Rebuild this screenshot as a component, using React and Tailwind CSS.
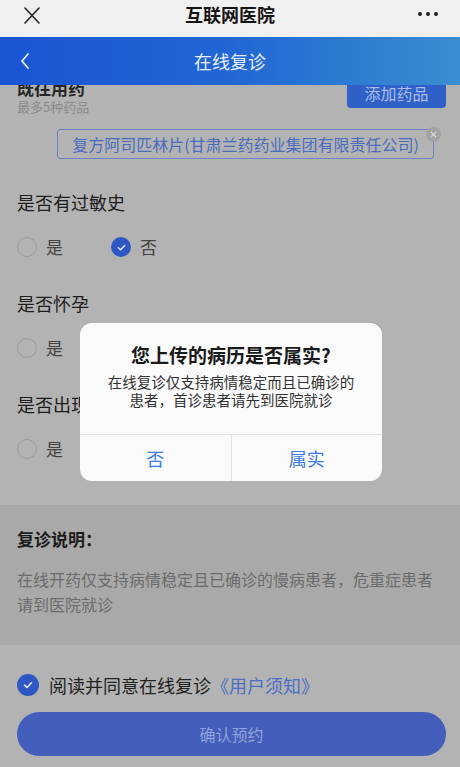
import React from "react";

const Radio = ({ checked, label }) => (
  <div className="flex items-center gap-[9px]">
    {checked ? (
      <span className="w-[20px] h-[20px] rounded-full bg-[#2d58c4] flex items-center justify-center">
        <svg width="11" height="11" viewBox="0 0 12 12" fill="none">
          <path d="M2.5 6.2 L5 8.5 L9.5 3.8" stroke="#dfe6f5" strokeWidth="1.6" strokeLinecap="round" strokeLinejoin="round" />
        </svg>
      </span>
    ) : (
      <span className="w-[20px] h-[20px] rounded-full border-[1.5px] border-[#9c9c9c]" />
    )}
    <span className="text-[17px] leading-[24px] text-[#444]">{label}</span>
  </div>
);

const Question = ({ title, answer, className }) => (
  <div className={"flex flex-col px-[17px] " + className}>
    <div className="text-[18px] leading-[24px] text-[#1e1e1e]">{title}</div>
    <div className="flex items-center gap-[48px] mt-[21px] h-[24px]">
      <Radio checked={answer === "yes"} label="是" />
      <Radio checked={answer === "no"} label="否" />
    </div>
  </div>
);

const App = () => {
  return (
    <div className="w-[460px] h-[767px] overflow-hidden relative bg-[#b3b3b3] font-['Noto_Sans_CJK_SC','Noto_Sans',sans-serif]">
      {/* wechat bar */}
      <div className="h-[37px] bg-[#f0f0f0] flex items-center justify-between px-[22px] relative z-20">
        <svg width="20" height="20" viewBox="0 0 20 20" className="-mt-[6px]">
          <path d="M3 2 L17 17 M17 2 L3 17" stroke="#222" strokeWidth="1.6" strokeLinecap="round" />
        </svg>
        <span className="text-[18px] font-bold text-[#151515] leading-[24px] -mt-[10px]">互联网医院</span>
        <div className="flex gap-[4px] -mt-[10px]">
          <span className="w-[4px] h-[4px] rounded-full bg-[#222]" />
          <span className="w-[4px] h-[4px] rounded-full bg-[#222]" />
          <span className="w-[4px] h-[4px] rounded-full bg-[#222]" />
        </div>
      </div>

      {/* page header */}
      <div className="h-[48px] bg-gradient-to-r from-[#1a55d4] via-[#2266d4] to-[#3b8ecf] flex items-center relative z-20 px-[18px]">
        <svg width="14" height="20" viewBox="0 0 14 20">
          <path d="M10 3 L4 10 L10 17" stroke="#e8eefa" strokeWidth="1.8" fill="none" strokeLinecap="round" strokeLinejoin="round" />
        </svg>
        <span className="absolute left-0 right-0 text-center text-[18px] text-[#e8eefa] leading-[24px]">在线复诊</span>
      </div>

      {/* content */}
      <div className="-mt-[7px] relative z-0">
        <div className="flex items-start justify-between px-[17px] pr-[14px]">
          <div className="flex flex-col">
            <span className="text-[17px] font-bold leading-[20px] text-[#262626]">既往用药</span>
            <span className="text-[13px] leading-[18px] text-[#8c8c8c]">最多5种药品</span>
          </div>
          <button className="h-[30px] w-[99px] rounded-[4px] bg-[#2f60c8] text-[16px] text-[#a9bde6] flex items-center justify-center">
            添加药品
          </button>
        </div>

        <div className="flex justify-end pr-[26px] mt-[13px]">
          <div className="relative h-[30px] px-[14px] border border-[#6b83c4] rounded-[3px] flex items-center text-[16px] text-[#4a6cbf] whitespace-nowrap">
            复方阿司匹林片(甘肃兰药药业集团有限责任公司)
            <span className="absolute -right-[8px] -top-[3px] w-[15px] h-[15px] rounded-full bg-[#a3a3a3] flex items-center justify-center">
              <svg width="7" height="7" viewBox="0 0 8 8">
                <path d="M1 1 L7 7 M7 1 L1 7" stroke="#dcdcdc" strokeWidth="1.3" />
              </svg>
            </span>
          </div>
        </div>

        <Question title="是否有过敏史" answer="no" className="mt-[31px]" />
        <Question title="是否怀孕" className="mt-[32px]" />
        <Question title="是否出现过不良反应" className="mt-[32px]" />

        <div className="mt-[44px] h-[140px] bg-[#a9a9a9] px-[17px] pt-[22px]">
          <div className="text-[17px] font-bold leading-[24px] text-[#1c1c1c]">复诊说明：</div>
          <div className="mt-[16px] text-[16px] leading-[25px] text-[#6c6c6c]">
            在线开药仅支持病情稳定且已确诊的慢病患者，危重症患者请到医院就诊
          </div>
        </div>

        <div className="px-[17px] pt-[28px]">
          <div className="flex items-center gap-[10px]">
            <span className="w-[22px] h-[22px] rounded-full bg-[#2d58c4] flex items-center justify-center">
              <svg width="12" height="12" viewBox="0 0 12 12" fill="none">
                <path d="M2.5 6.2 L5 8.5 L9.5 3.8" stroke="#dfe6f5" strokeWidth="1.6" strokeLinecap="round" strokeLinejoin="round" />
              </svg>
            </span>
            <span className="text-[18px] leading-[24px] text-[#222]">
              阅读并同意在线复诊<span className="text-[#4a6fc4]">《用户须知》</span>
            </span>
          </div>
          <button className="mt-[15px] w-[429px] h-[44px] rounded-full bg-[#435ebb] text-[16px] text-[#93a3d8] flex items-center justify-center">
            确认预约
          </button>
        </div>
      </div>

      {/* dialog */}
      <div className="absolute left-[80px] top-[323px] w-[302px] h-[158px] rounded-[12px] bg-[#fafafa] flex flex-col z-30 overflow-hidden">
        <div className="flex-1 flex flex-col items-center pt-[19px]">
          <div className="text-[19px] font-bold leading-[26px] text-[#1a1a1a]">您上传的病历是否属实?</div>
          <div className="mt-[5px] text-[14.5px] leading-[18px] text-[#333] text-center">
            在线复诊仅支持病情稳定而且已确诊的
            <br />
            患者，首诊患者请先到医院就诊
          </div>
        </div>
        <div className="h-[47px] border-t border-[#e2e2e2] flex">
          <button className="flex-1 flex items-center justify-center text-[18px] text-[#3d7ce0] border-r border-[#e2e2e2]">否</button>
          <button className="flex-1 flex items-center justify-center text-[18px] text-[#3d7ce0]">属实</button>
        </div>
      </div>
    </div>
  );
};

export default App;
